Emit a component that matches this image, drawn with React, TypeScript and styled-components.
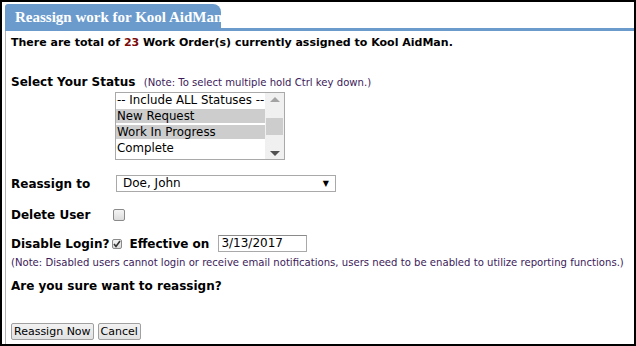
import React from 'react'
import styled, {createGlobalStyle} from 'styled-components'

const Global = createGlobalStyle`
  html, body {
    margin: 0;
    padding: 0;
    background: #fff;
  }
  * {
    box-sizing: border-box;
  }
`

const Frame = styled.div`
  width: 636px;
  height: 346px;
  border: 2px solid #000;
  padding: 2px 0 0 3px;
  display: flex;
  flex-direction: column;
  font-family: "DejaVu Sans", Verdana, sans-serif;
  color: #000;
`

const Header = styled.div`
  display: flex;
  align-items: flex-end;
  height: 27px;
`

const Tab = styled.div`
  height: 27px;
  width: 216px;
  background: #6b9bcd;
  border-radius: 3px 8px 0 0;
  color: #fff;
  font-family: "Liberation Serif", "Times New Roman", serif;
  font-weight: bold;
  font-size: 15px;
  padding: 5px 0 0 10px;
  white-space: nowrap;
`

const Rule = styled.div`
  flex: 1;
  height: 3px;
  background: #6b9bcd;
`

const Content = styled.div`
  flex: 1;
  border-left: 1px solid #b4b4b4;
  padding: 5px 0 0 5px;
  display: flex;
  flex-direction: column;
`

const Bold = styled.div<{top?: number; size?: number}>`
  font-weight: bold;
  font-size: ${p => p.size || 12}px;
  line-height: 14px;
  margin-top: ${p => p.top || 0}px;
  white-space: nowrap;
`

const Count = styled.span`
  color: #7a0a0a;
`

const Note = styled.span<{top?: number}>`
  font-weight: normal;
  font-size: 10.1px;
  line-height: 12px;
  color: #3c1a5a;
  margin-top: ${p => p.top || 0}px;
  white-space: nowrap;
`

const Row = styled.div<{top?: number}>`
  display: flex;
  align-items: center;
  height: 17px;
  margin-top: ${p => p.top || 0}px;
`

const Label = styled.div<{w?: number}>`
  font-weight: bold;
  font-size: 12px;
  width: ${p => (p.w ? p.w + 'px' : 'auto')};
  white-space: nowrap;
`

const ListBox = styled.div`
  margin: 3px 0 0 104px;
  width: 170px;
  height: 68px;
  border: 1px solid #a9a9a9;
  display: flex;
`

const Options = styled.div`
  flex: 1;
`

const Option = styled.div<{selected?: boolean}>`
  height: 14px;
  line-height: 14px;
  font-size: 11.8px;
  padding-left: 1px;
  margin-bottom: 2px;
  background: ${p => (p.selected ? '#cdcdcd' : 'transparent')};
  white-space: nowrap;
  overflow: hidden;
`

const ScrollBar = styled.div`
  width: 19px;
  background: #f0f0f0;
  display: flex;
  flex-direction: column;
  align-items: center;
  justify-content: space-between;
  padding: 4px 0 3px;
`

const Thumb = styled.div`
  width: 17px;
  height: 17px;
  background: #cdcdcd;
`

const Arrow = styled.div<{up?: boolean; color: string}>`
  width: 0;
  height: 0;
  border-left: 5px solid transparent;
  border-right: 5px solid transparent;
  ${p => (p.up ? `border-bottom: 5px solid ${p.color};` : `border-top: 5px solid ${p.color};`)}
`

const Select = styled.div`
  width: 220px;
  height: 17px;
  border: 1px solid #a9a9a9;
  font-size: 12px;
  line-height: 15px;
  padding: 0 0 0 6px;
  display: flex;
  justify-content: space-between;
  align-items: center;
`

const Caret = styled.span`
  font-size: 8px;
  margin-right: 6px;
`

const Check = styled.div<{checked?: boolean}>`
  width: ${p => (p.checked ? 10 : 12)}px;
  height: ${p => (p.checked ? 10 : 12)}px;
  margin-left: ${p => (p.checked ? 3 : 0)}px;
  border: 1px solid #8a8a8a;
  border-radius: 2px;
  background: linear-gradient(#f4f4f4, #dcdcdc);
  display: flex;
  align-items: center;
  justify-content: center;
`

const Effective = styled(Label)`
  margin: 0 9px 0 7px;
`

const TextInput = styled.div`
  width: 89px;
  height: 17px;
  border: 1px solid #a9a9a9;
  border-top-color: #8a8a8a;
  font-size: 12px;
  line-height: 15px;
  padding-left: 2px;
`

const Buttons = styled.div`
  display: flex;
  gap: 4px;
  margin-top: 30px;
`

const Button = styled.button`
  height: 17px;
  padding: 0 2px;
  font-family: "DejaVu Sans", Verdana, sans-serif;
  font-size: 11px;
  line-height: 15px;
  color: #000;
  background: linear-gradient(#f2f2f2, #e2e2e2);
  border: 1px solid #a0a0a0;
  border-radius: 2px;
`

const statuses = [
    {name: '-- Include ALL Statuses --', selected: false},
    {name: 'New Request', selected: true},
    {name: 'Work In Progress', selected: true},
    {name: 'Complete', selected: false},
]

export default function App() {
    return (
        <Frame>
            <Global/>
            <Header>
                <Tab>Reassign work for Kool AidMan</Tab>
                <Rule/>
            </Header>
            <Content>
                <Bold size={11}>There are total of <Count>23</Count> Work Order(s) currently assigned to Kool AidMan.</Bold>

                <Bold top={25}>Select Your Status&nbsp; <Note>(Note: To select multiple hold Ctrl key down.)</Note></Bold>
                <ListBox>
                    <Options>
                        {statuses.map(s =>
                            <Option key={s.name} selected={s.selected}>{s.name}</Option>
                        )}
                    </Options>
                    <ScrollBar>
                        <Arrow up color='#a3a3a3'/>
                        <Thumb/>
                        <Arrow color='#505050'/>
                    </ScrollBar>
                </ListBox>

                <Row top={15}>
                    <Label w={105}>Reassign to</Label>
                    <Select>Doe, John<Caret>▼</Caret></Select>
                </Row>

                <Row top={14}>
                    <Label w={102}>Delete User</Label>
                    <Check/>
                </Row>

                <Row top={12}>
                    <Label>Disable Login?</Label>
                    <Check checked>
                        <svg width='8' height='8' viewBox='0 0 8 8'>
                            <path d='M1 4 L3 6.5 L7 1' fill='none' stroke='#333' strokeWidth='1.6'/>
                        </svg>
                    </Check>
                    <Effective>Effective on</Effective>
                    <TextInput>3/13/2017</TextInput>
                </Row>
                <Note top={5}>(Note: Disabled users cannot login or receive email notifications, users need to be enabled to utilize reporting functions.)</Note>

                <Bold top={10}>Are you sure want to reassign?</Bold>

                <Buttons>
                    <Button>Reassign Now</Button>
                    <Button>Cancel</Button>
                </Buttons>
            </Content>
        </Frame>
    )
}
